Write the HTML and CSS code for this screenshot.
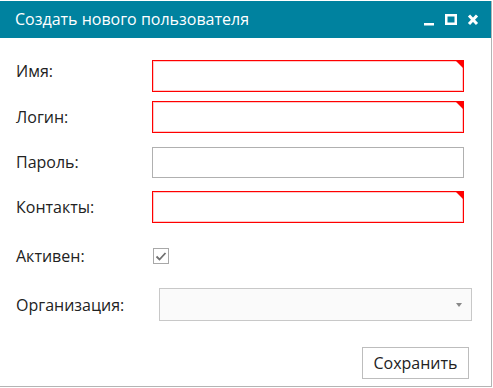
FILE: index.html
```html
<!DOCTYPE html>
<html lang="ru">
<head>
<meta charset="utf-8">
<title>Создать нового пользователя</title>
<link rel="stylesheet" href="styles.css">
</head>
<body>
<div class="window">
  <div class="titlebar">
    <span class="title">Создать нового пользователя</span>
    <div class="actions">
      <svg class="ico" width="12" height="12" viewBox="0 0 12 12"><rect x="1" y="9" width="10" height="2.5" fill="#fff"/></svg>
      <svg class="ico" width="12" height="12" viewBox="0 0 12 12"><rect x="1.25" y="1.25" width="9.5" height="8.5" fill="none" stroke="#fff" stroke-width="2.5"/></svg>
      <svg class="ico" width="12" height="12" viewBox="0 0 12 12"><path d="M2 1.5 L10 10 M10 1.5 L2 10" stroke="#fff" stroke-width="3" stroke-linecap="butt"/></svg>
    </div>
  </div>
  <div class="content">
    <div class="row r1">
      <label class="lbl lbl-up">Имя:</label>
      <div class="field invalid"><span class="flag"></span></div>
    </div>
    <div class="row r2">
      <label class="lbl">Логин:</label>
      <div class="field invalid"><span class="flag"></span></div>
    </div>
    <div class="row r3">
      <label class="lbl">Пароль:</label>
      <div class="field"></div>
    </div>
    <div class="row r4">
      <label class="lbl">Контакты:</label>
      <div class="field invalid"><span class="flag"></span></div>
    </div>
    <div class="row r5">
      <label class="lbl">Активен:</label>
      <div class="check">
        <svg width="14" height="14" viewBox="0 0 14 14"><path d="M2.5 7.5 L5.5 10.5 L11.5 4" fill="none" stroke="#707070" stroke-width="1.8"/></svg>
      </div>
    </div>
    <div class="row r6">
      <label class="lbl lbl-wide">Организация:</label>
      <div class="select"><span class="arrow"></span></div>
    </div>
    <div class="footer">
      <button class="btn">Сохранить</button>
    </div>
  </div>
</div>
</body>
</html>
```

FILE: styles.css
```css
html, body {
  margin: 0;
  padding: 0;
  background: #fff;
}
body {
  width: 493px;
  height: 388px;
  overflow: hidden;
  font-family: "Open Sans", "Noto Sans", sans-serif;
  color: #222;
}
.window {
  margin-top: 1px;
  width: 491px;
  height: 385px;
  border-right: 1px solid #b4b4b4;
  border-bottom: 1px solid #b4b4b4;
  display: flex;
  flex-direction: column;
}
.titlebar {
  height: 37px;
  background: #00829f;
  color: #fff;
  display: flex;
  align-items: center;
  padding: 0 12px 0 15px;
  flex-shrink: 0;
}
.title {
  font-size: 16px;
  flex: 1;
  margin-top: -1px;
}
.actions {
  display: flex;
  gap: 10px;
  align-items: center;
  margin-top: 1px;
}
.ico { display: block; }
.content {
  flex: 1;
  display: flex;
  flex-direction: column;
  padding: 22px 22px 0 16px;
}
.row {
  display: flex;
  align-items: center;
}
.lbl {
  width: 136px;
  font-size: 16px;
  flex-shrink: 0;
}
.lbl-up { margin-top: -10px; }
.lbl-wide { width: 143px; }
.field {
  position: relative;
  width: 310px;
  height: 30px;
  border: 1px solid #b0b0b0;
  background: #fff;
  flex-shrink: 0;
}
.field.invalid {
  border-color: #ff0000;
  box-shadow: inset 0 0 0 1px #ffc8c8;
}
.flag {
  position: absolute;
  top: 0;
  right: 0;
  width: 0;
  height: 0;
  border-top: 7px solid #ff0000;
  border-left: 7px solid transparent;
}
.r1 { height: 32px; }
.r2 { height: 32px; margin-top: 9px; }
.r3 { height: 32px; margin-top: 13px; }
.r3 .field { height: 29px; }
.r4 { height: 32px; margin-top: 13px; }
.r5 { height: 32px; margin-top: 17px; }
.r6 { height: 33px; margin-top: 16px; }
.check {
  width: 14px;
  height: 14px;
  border: 1px solid #a8a8a8;
  margin-left: 1px;
  background: #fff;
}
.check svg { display: block; }
.select {
  position: relative;
  width: 311px;
  height: 31px;
  border: 1px solid #c8c8c8;
  background: #fafafa;
  flex-shrink: 0;
}
.arrow {
  position: absolute;
  right: 9px;
  top: 14px;
  width: 0;
  height: 0;
  border-left: 3px solid transparent;
  border-right: 3px solid transparent;
  border-top: 4px solid #888;
}
.footer {
  display: flex;
  justify-content: flex-end;
  margin-top: 26px;
}
.btn {
  width: 107px;
  height: 32px;
  border: 1px solid #bdbdbd;
  background: #fff;
  font-family: "Open Sans", "Noto Sans", sans-serif;
  font-size: 16px;
  color: #222;
  padding: 0;
}
```
